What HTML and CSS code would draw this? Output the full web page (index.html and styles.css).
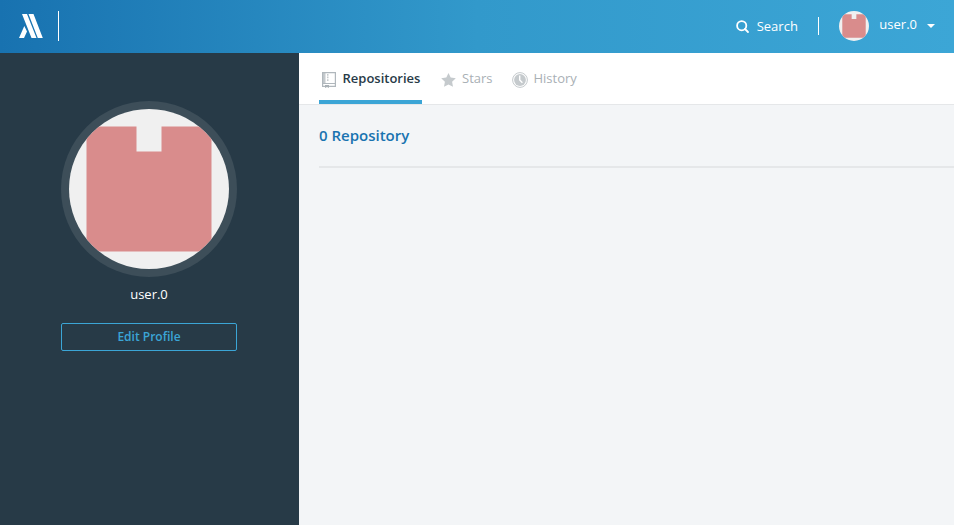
FILE: index.html
```html
<!DOCTYPE html>
<html lang="en">
<head>
<meta charset="utf-8">
<title>user.0</title>
<link rel="stylesheet" href="styles.css">
</head>
<body>
<header class="topbar">
  <svg class="logo" width="24" height="24" viewBox="0 0 24 24"><path d="M3 0h5l9.500 24h-5zM9.500 0h5l9.300 24h-5zM5.300 12l2.700 5.500L5 24H0z"/></svg>
  <span class="brand-line"></span>
  <a class="search"><svg width="14" height="14" viewBox="0 0 14 14"><circle cx="5.700" cy="5.700" r="4.600"/><path d="M9 9l3 3"/></svg><span>Search</span></a>
  <span class="search-line"></span>
  <svg class="avatar-small" viewBox="0 0 160 160"><path d="M17.500 17.500h50v25h25v-25h50v125h-125z"/></svg>
  <span class="account">user.0</span>
  <span class="caret"></span>
</header>
<div class="page">
  <aside class="sidebar">
    <div class="avatar-ring"><svg class="avatar" viewBox="0 0 160 160"><path d="M17.500 17.500h50v25h25v-25h50v125h-125z"/></svg></div>
    <div class="username">user.0</div>
    <a class="edit">Edit Profile</a>
  </aside>
  <main class="main">
    <nav class="tabs">
      <a class="tab active"><svg class="repo-icon" width="14" height="16" viewBox="0 0 14 16"><path class="fill" d="M0 0h3.500v12H0zM5 2h1.500v1.700H5zM5 4.600h1.500v1.700H5zM5 7.200h1.500v1.700H5z"/><path class="outline" d="M.6.6h12.800v13.800H.6zM.5 11.500h13"/><path class="mark" d="M3 13h4v3l-2-1-2 1z"/></svg><span>Repositories</span></a>
      <a class="tab"><svg class="star-icon" width="15" height="14" viewBox="0 0 15 14"><path class="fill" d="M7.500 0l2.200 4.500 5.100.7-3.700 3.500.9 5.100-4.500-2.400L3 13.800l.9-5.100L.2 5.200l5.100-.7z"/></svg><span>Stars</span></a>
      <a class="tab"><svg class="clock-icon" width="16" height="16" viewBox="0 0 16 16"><circle class="ring" cx="8" cy="8" r="7.400"/><circle class="fill" cx="8" cy="8" r="5.900"/><path class="hands" d="M7.700 3.500V8l2.700 2.700"/></svg><span>History</span></a>
    </nav>
    <section class="content"><h1>0 Repository</h1></section>
  </main>
</div>
</body>
</html>
```
FILE: styles.css
```css
* { box-sizing: border-box; }
body { margin: 0; height: 525px; overflow: hidden; font: 13px/18px "Open Sans", sans-serif; background: #f3f5f7; }
svg { display: block; flex: none; }
.topbar { height: 53px; display: flex; align-items: flex-start; padding: 0 19px; color: #fff; background: linear-gradient(90deg, #1872b0, #3299cb 50%, #3ca6d6); }
.logo { margin-top: 14px; fill: #fff; }
.brand-line { width: 1px; height: 30px; margin: 11px 0 0 15px; background: #fff; }
.search { display: flex; align-items: flex-start; gap: 7px; margin: 17px 20.500px 0 auto; }
.search svg { margin-top: 3px; fill: none; stroke: #fff; stroke-width: 1.8; stroke-linecap: round; }
.search-line { width: 1px; height: 18px; margin: 17px 20px 0 0; background: #fff; }
.avatar-small { width: 30px; height: 30px; margin-top: 11px; }
.avatar-small, .avatar { border-radius: 50%; background: #f0f0f0; fill: #d98c8c; }
.account { margin: 15px 10px 0; }
.caret { margin-top: 23.500px; border: 4px solid transparent; border-top-color: #fff; border-bottom: 0; }
.page { display: flex; height: 472px; }
.sidebar { width: 299px; padding: 48px 61px 0; background: #273a47; color: #fff; text-align: center; flex: none; }
.avatar-ring { width: 176px; height: 176px; padding: 8px; border-radius: 50%; background: #3d4e59; }
.avatar { width: 160px; height: 160px; }
.username { margin: 8px 1px 0 0; }
.edit { display: block; width: 176px; height: 28px; margin-top: 20px; border: 1px solid #3ba5d6; border-radius: 2px; color: #3ba5d6; font-size: 12px; font-weight: 600; line-height: 26px; }
.main { flex: 1; min-width: 0; }
.tabs { display: flex; gap: 18px; height: 52px; padding-left: 20px; background: #fff; border-bottom: 1px solid #e5e7e9; }
.tab { display: flex; align-items: flex-start; padding-top: 16px; height: 51px; color: #a9b0b5; }
.active { width: 103px; border-bottom: 4px solid #3ba5d6; color: #273a47; font-weight: 600; }
.repo-icon { margin: 3px 6.500px 0 3px; }
.star-icon { margin: 4px 6.500px 0 .5px; }
.clock-icon { margin: 3px 5.500px 0 1.500px; }
.fill { fill: #c5cacd; }
.outline { fill: none; stroke: #b0b7bc; stroke-width: 1.2; }
.mark { fill: #a9b0b5; }
.ring { fill: none; stroke: #c5cacd; stroke-width: 1; }
.hands { fill: none; stroke: #fff; stroke-width: 1.4; }
.content { margin-left: 20px; height: 63px; border-bottom: 2px solid #e5e7e9; }
h1 { margin: 0; padding-top: 19px; color: #1973b0; font-size: 15px; line-height: 22px; font-weight: 600; }
```
